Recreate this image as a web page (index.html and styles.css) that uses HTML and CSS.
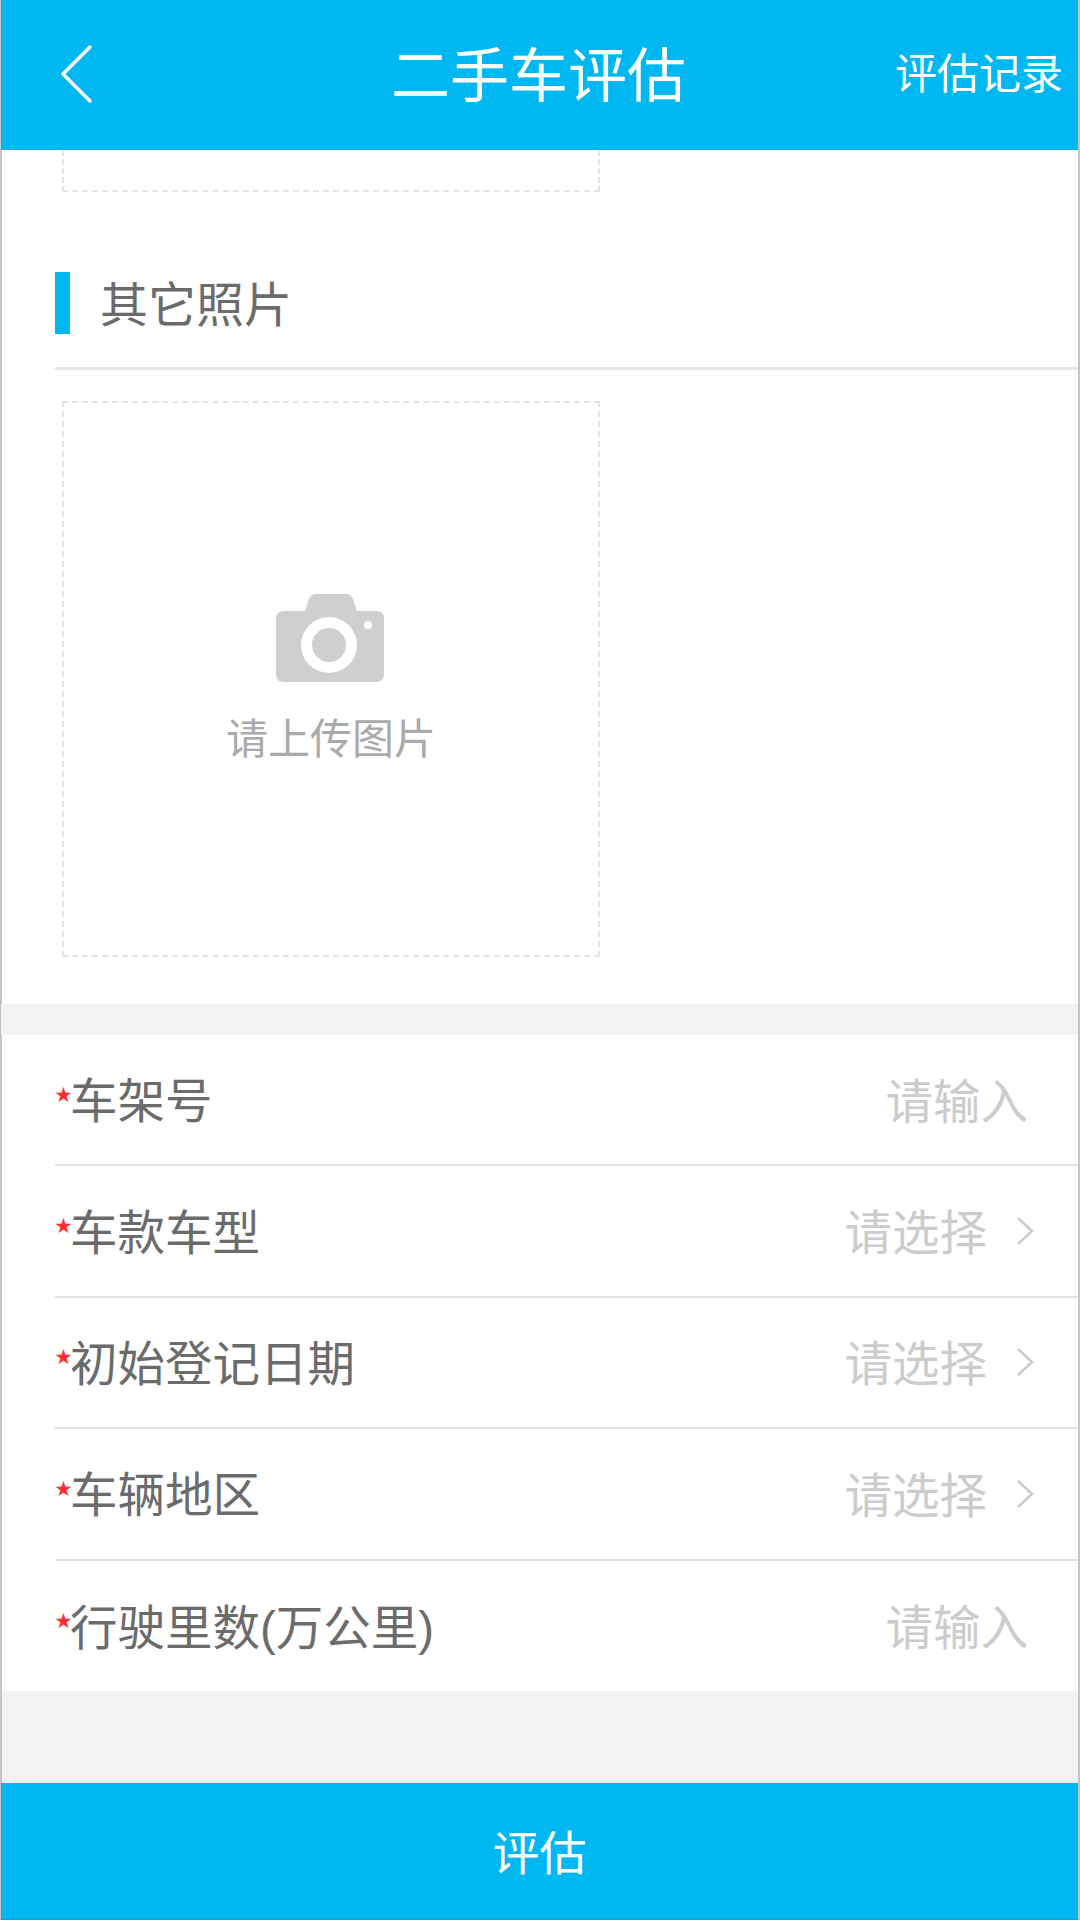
FILE: index.html
```html
<!DOCTYPE html>
<html lang="zh-CN">
<head>
    <meta charset="UTF-8">
    <meta name="viewport" content="width=device-width, initial-scale=1.0">
    <title>二手车评估</title>
    <link rel="stylesheet" href="styles.css">
</head>
<body>
    <div class="app">
        <!-- Header -->
        <header class="header">
            <svg class="back" width="36" height="60" viewBox="0 0 36 60">
                <path d="M32 3 L5 30 L32 57" fill="none" stroke="#fff" stroke-width="3.5" stroke-linecap="round" stroke-linejoin="round"/>
            </svg>
            <h1 class="header-title">二手车评估</h1>
            <span class="header-link">评估记录</span>
        </header>

        <!-- Photos -->
        <section class="photos">
            <div class="upload-stub"></div>
            <div class="section-title">
                <span class="section-bar"></span>
                <span class="section-text">其它照片</span>
            </div>
            <div class="upload-box">
                <svg class="camera" width="110" height="90" viewBox="0 0 110 90">
                    <path d="M9 18 H30 L34 6 Q36 1 41 1 H71 Q76 1 78 6 L82 18 H101 Q109 18 109 26 V81 Q109 89 101 89 H9 Q1 89 1 81 V26 Q1 18 9 18 Z" fill="#cfcfcf"/>
                    <circle cx="54" cy="52" r="28" fill="#fff"/>
                    <circle cx="54" cy="52" r="17" fill="#cfcfcf"/>
                    <circle cx="93" cy="32" r="4" fill="#fff"/>
                </svg>
                <span class="upload-text">请上传图片</span>
            </div>
        </section>

        <!-- Form -->
        <section class="form">
            <div class="row">
                <span class="star">★</span><span class="label">车架号</span>
                <span class="value value-input">请输入</span>
            </div>
            <div class="row">
                <span class="star">★</span><span class="label">车款车型</span>
                <span class="value">请选择</span>
                <svg class="arrow" width="18" height="30" viewBox="0 0 18 30"><path d="M2 2 L16 15 L2 28" fill="none" stroke="#ccc" stroke-width="2.5"/></svg>
            </div>
            <div class="row">
                <span class="star">★</span><span class="label">初始登记日期</span>
                <span class="value">请选择</span>
                <svg class="arrow" width="18" height="30" viewBox="0 0 18 30"><path d="M2 2 L16 15 L2 28" fill="none" stroke="#ccc" stroke-width="2.5"/></svg>
            </div>
            <div class="row">
                <span class="star">★</span><span class="label">车辆地区</span>
                <span class="value">请选择</span>
                <svg class="arrow" width="18" height="30" viewBox="0 0 18 30"><path d="M2 2 L16 15 L2 28" fill="none" stroke="#ccc" stroke-width="2.5"/></svg>
            </div>
            <div class="row">
                <span class="star">★</span><span class="label">行驶里数(万公里)</span>
                <span class="value value-input">请输入</span>
            </div>
        </section>

        <div class="spacer"></div>

        <!-- Footer Button -->
        <button class="submit">评估</button>
    </div>
</body>
</html>
```

FILE: styles.css
```css
* {
    box-sizing: border-box;
}
body {
    margin: 0;
    background: #fff;
    font-family: "Liberation Sans", "Noto Sans CJK SC", sans-serif;
}
.app {
    display: flex;
    flex-direction: column;
    width: 1080px;
    height: 1920px;
    overflow: hidden;
    border-left: 1px solid #c4c4c4;
    border-right: 2px solid #c4c4c4;
    background: #f2f2f2;
}
.header {
    display: flex;
    align-items: center;
    position: relative;
    height: 150px;
    flex-shrink: 0;
    padding: 0 15px 0 57px;
    background: #00b8f1;
    color: #fff;
}
.back {
    margin-top: -3px;
}
.header-title {
    position: absolute;
    left: 390px;
    top: 42px;
    margin: 0;
    font-size: 59px;
    line-height: 70px;
    font-weight: 400;
}
.header-link {
    margin-left: auto;
    font-size: 42px;
    line-height: 50px;
}
.photos {
    height: 854px;
    flex-shrink: 0;
    padding: 0 0 0 53px;
    border-left: 1px solid #c4c4c4;
    background: #fff;
}
.upload-stub {
    width: 538px;
    height: 42px;
    margin-left: 7px;
    border: 2px dashed #e4e4e4;
    border-top: 0;
}
.section-title {
    display: flex;
    align-items: center;
    height: 178px;
    padding-top: 46px;
    border-bottom: 3px solid #e6e6e6;
}
.section-bar {
    width: 15px;
    height: 62px;
    background: #00b8f1;
}
.section-text {
    margin-left: 30px;
    padding-top: 7px;
    font-size: 48px;
    line-height: 60px;
    color: #6b6b6b;
}
.upload-box {
    display: flex;
    flex-direction: column;
    align-items: center;
    width: 538px;
    height: 556px;
    margin: 31px 0 0 7px;
    padding-top: 190px;
    border: 2px dashed #e4e4e4;
}
.camera {
    margin-left: -2px;
}
.upload-text {
    margin-top: 32px;
    font-size: 42px;
    line-height: 50px;
    color: #aaa;
}
.form {
    height: 656px;
    flex-shrink: 0;
    margin-top: 31px;
    padding-left: 53px;
    border-left: 1px solid #c4c4c4;
    background: #fff;
}
.row {
    display: flex;
    align-items: center;
    height: 131.4px;
    padding-right: 40px;
    border-bottom: 2px solid #e2e2e2;
}
.row:last-child {
    border-bottom: 0;
}
.star {
    width: 15px;
    margin-top: -8px;
    font-size: 17px;
    line-height: 20px;
    color: #ff2d2d;
}
.label {
    padding-top: 5px;
    font-size: 47.5px;
    line-height: 60px;
    color: #6b6b6b;
}
.value {
    margin-left: auto;
    padding-top: 6px;
    font-size: 47.5px;
    line-height: 60px;
    color: #ccc;
}
.value-input {
    margin-right: 10px;
}
.arrow {
    margin-left: 29px;
    margin-right: 4px;
}
.spacer {
    flex: 1;
    border-left: 1px solid #c4c4c4;
}
.submit {
    height: 137px;
    flex-shrink: 0;
    padding: 0 0 4px;
    border: 0;
    border-bottom: 1px solid #0aa5d6;
    background: #00b8f1;
    color: #fff;
    font-family: inherit;
    font-size: 47px;
}
```
